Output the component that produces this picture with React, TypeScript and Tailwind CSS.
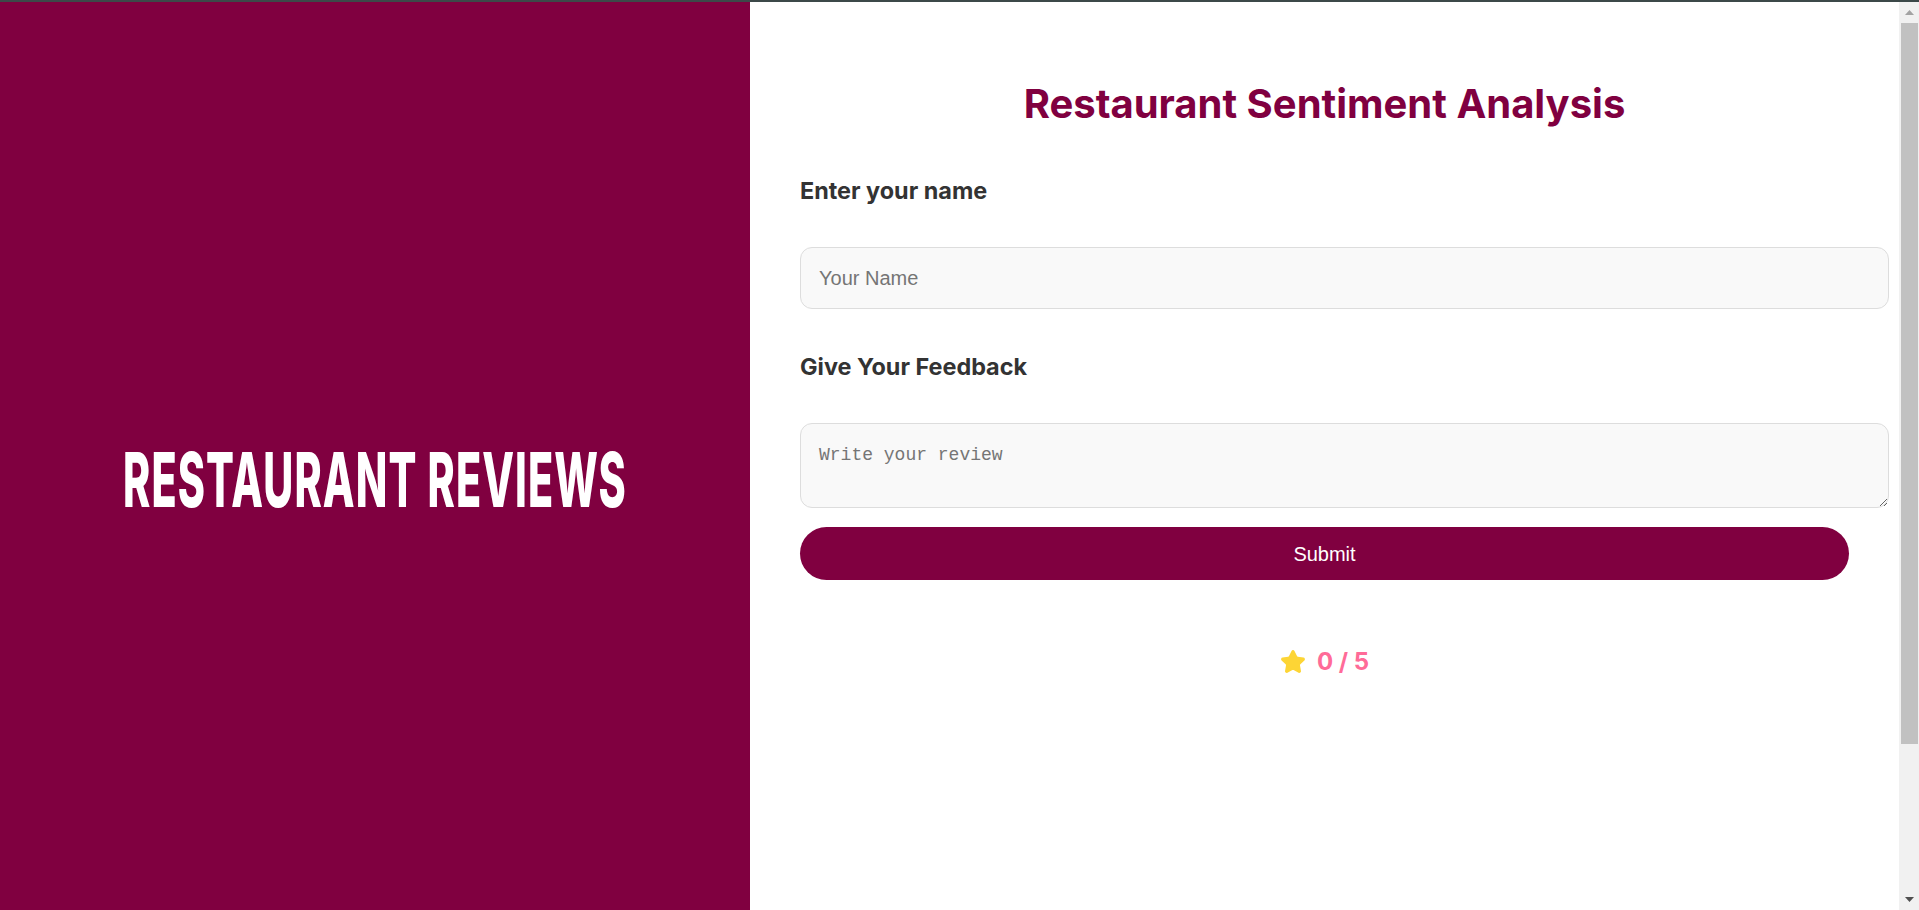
import React from "react";

function StarIcon() {
  return (
    <svg width="26" height="26" viewBox="0 0 24 24" fill="#fdd535" stroke="#fdd535" strokeWidth="2" strokeLinejoin="round" strokeLinecap="round">
      <path d="M11.525 2.295a.53.53 0 0 1 .95 0l2.31 4.679a2.123 2.123 0 0 0 1.595 1.16l5.166.756a.53.53 0 0 1 .294.904l-3.736 3.638a2.123 2.123 0 0 0-.611 1.878l.882 5.14a.53.53 0 0 1-.771.56l-4.618-2.428a2.122 2.122 0 0 0-1.973 0L6.396 21.01a.53.53 0 0 1-.77-.56l.881-5.139a2.122 2.122 0 0 0-.611-1.879L2.16 9.795a.53.53 0 0 1 .294-.906l5.165-.755a2.122 2.122 0 0 0 1.597-1.16z" />
    </svg>
  );
}

function Scrollbar() {
  return (
    <div className="w-[20px] shrink-0 bg-[#f1f1f1] flex flex-col">
      <div className="h-[21px] flex items-center justify-center">
        <svg width="9" height="5" viewBox="0 0 9 5">
          <path d="M0 5 L4.5 0 L9 5 Z" fill="#a3a3a3" />
        </svg>
      </div>
      <div className="h-[721px] ml-[2px] mr-[1px] bg-[#c1c1c1]" />
      <div className="flex-1" />
      <div className="h-[21px] flex items-center justify-center">
        <svg width="9" height="5" viewBox="0 0 9 5">
          <path d="M0 0 L9 0 L4.5 5 Z" fill="#505050" />
        </svg>
      </div>
    </div>
  );
}

export default function App() {
  return (
    <div className="flex flex-col h-[910px] overflow-hidden bg-white">
      <div className="h-[2px] shrink-0 bg-[#3c4949]" />
      <div className="flex flex-1 min-h-0">
        <div className="w-[750px] shrink-0 bg-[#800040] flex justify-center pt-[417px]">
          <div
            className="inline-block h-[120px] scale-x-[0.543] text-white whitespace-nowrap text-[76px] leading-[120px] font-extrabold tracking-[2px]"
            style={{ fontFamily: "Inter, Roboto, sans-serif" }}
          >
            RESTAURANT REVIEWS
          </div>
        </div>
        <div className="flex-1 min-w-0 px-[50px] pt-[78px] flex flex-col" style={{ fontFamily: "Inter, sans-serif" }}>
          <h1 className="text-center text-[40px] leading-[48px] font-bold text-[#800040]">
            Restaurant Sentiment Analysis
          </h1>
          <label className="mt-[49px] text-[23.4px] leading-[28px] font-bold text-[#333333]">
            Enter your name
          </label>
          <input
            type="text"
            placeholder="Your Name"
            className="mt-[42px] box-content w-full h-[24px] py-[18px] pl-[18px] pr-[20px] border border-[#dddddd] rounded-[12px] bg-[#f9f9f9] text-[20px] text-[#333] placeholder:text-[#757575] outline-none"
            style={{ fontFamily: "'Liberation Sans', Arial, sans-serif" }}
          />
          <label className="mt-[44px] text-[23.4px] leading-[28px] font-bold text-[#333333]">
            Give Your Feedback
          </label>
          <textarea
            placeholder="Write your review"
            className="mt-[42px] box-content w-full h-[47px] pt-[20px] pb-[16px] pl-[18px] pr-[20px] border border-[#dddddd] rounded-[12px] bg-[#f9f9f9] text-[18px] leading-[22px] text-[#333] placeholder:text-[#757575] outline-none"
            style={{ fontFamily: "'Liberation Mono', monospace" }}
          />
          <button
            className="mt-[19px] h-[53px] w-full shrink-0 rounded-full bg-[#800040] text-white text-[20px]"
            style={{ fontFamily: "'Liberation Sans', Arial, sans-serif" }}
          >
            Submit
          </button>
          <div className="mt-[67px] flex items-center justify-center gap-[11px] h-[30px]">
            <StarIcon />
            <span className="text-[24px] font-bold text-[#ff6b98]">0 / 5</span>
          </div>
        </div>
        <Scrollbar />
      </div>
    </div>
  );
}
